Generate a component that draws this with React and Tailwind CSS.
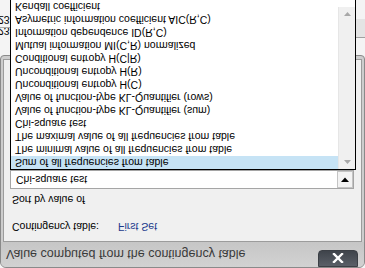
import React from "react";

const items = [
  "Sum of all frequencies from table",
  "The minimal value of all frequencies from table",
  "The maximal value of all frequencies from table",
  "Chi-square test",
  "Value of function-type KL-Quantifier (sum)",
  "Value of function-type KL-Quantifier (rows)",
  "Unconditional entropy H(C)",
  "Unconditional entropy H(R)",
  "Conditional entropy H(C|R)",
  "Mutual information MI(C,R) normalized",
  "Information dependence ID(R,C)",
  "Asymetric information coefficient AIC(R,C)",
  "Kendall coefficient",
];

export default function App() {
  return (
    <div
      className="relative w-[365px] h-[268px] overflow-hidden -scale-y-100 bg-[#f4f4f4] flex flex-col text-black"
      style={{ fontFamily: '"Liberation Sans", Arial, sans-serif' }}
    >
      {/* dialog window */}
      <div className="w-[365px] h-[213px] shrink-0 rounded-t-[6px] rounded-b-[4px] border border-[#8a8a8a] bg-[#cdcdcd] flex flex-col">
        {/* title bar */}
        <div className="h-[25px] shrink-0 flex items-start justify-between pl-[5px] pr-[6px] bg-gradient-to-b from-[#d2d2d2] to-[#c6c6c6] rounded-t-[5px]">
          <div className="text-[12.5px] leading-[15px] mt-[6px] text-[#3a3a3a]">
            Value computed from the contingency table
          </div>
          <div className="w-[40px] h-[17px] rounded-b-[4px] border border-[#3b3f45] bg-gradient-to-b from-[#5a5f67] to-[#3f444b] flex items-center justify-center">
            <svg width="12" height="10" viewBox="0 0 12 10">
              <path d="M2 1 L10 9 M10 1 L2 9" stroke="white" strokeWidth="2.4" strokeLinecap="square" />
            </svg>
          </div>
        </div>
        {/* client */}
        <div className="flex-1 mx-[2px] mb-[3px] bg-[#f0f0f0] border border-[#9c9c9c] flex flex-col text-[10.5px] leading-[13px]">
          <div className="pl-[8px] pt-[8px] flex">
            <span>Contingency table:</span>
            <span className="ml-[19px] text-[#1c3a8c]">First Set</span>
          </div>
          <div className="pl-[8px] mt-[14px]">Sort by value of</div>
          <div className="ml-[6px] mt-[4px] w-[344px] h-[19px] bg-white border border-[#a5a5a5] flex items-center justify-between">
            <span className="pl-[5px]">Chi-square test</span>
            <div className="w-[16px] h-[17px] border border-[#c4c4c4] bg-[#f3f3f3] flex items-center justify-center">
              <svg width="8" height="5" viewBox="0 0 8 5">
                <path d="M0 0 L8 0 L4 4.5 Z" fill="black" />
              </svg>
            </div>
          </div>
        </div>
      </div>

      {/* parent application behind */}
      <div className="flex-1 flex justify-between text-[10.5px] leading-[12px]">
        <div className="w-[11px] flex flex-col pt-[18px]">
          <div className="h-[9px] overflow-hidden -ml-[2px]">23</div>
          <div className="border-t border-[#a8a8a8] -ml-[2px] pt-[1px]">23</div>
        </div>
        <div className="w-[10px] flex flex-col pt-[17px]">
          <div className="border-t border-[#a0a0a0] h-[19px] bg-[#e4e4e4]"></div>
        </div>
      </div>

      {/* dropdown list overlay */}
      <div className="absolute left-[10px] top-[98px] w-[346px] h-[180px] bg-white border border-black flex text-[10.5px]">
        <div className="flex-1 flex flex-col">
          {items.map((t, i) => (
            <div
              key={i}
              className={
                "h-[13px] leading-[13px] pl-[4px] whitespace-nowrap overflow-hidden " +
                (i === 0 ? "bg-[#c6e3f5]" : "")
              }
            >
              {t}
            </div>
          ))}
        </div>
        <div className="w-[17px] h-[162px] bg-[#f0f0f0] border-l border-[#e6e6e6] flex flex-col justify-between items-center py-[5px]">
          <svg width="7" height="4" viewBox="0 0 7 4">
            <path d="M0 4 L7 4 L3.5 0 Z" fill="#a8a8a8" />
          </svg>
          <svg width="7" height="4" viewBox="0 0 7 4">
            <path d="M0 0 L7 0 L3.5 4 Z" fill="#a8a8a8" />
          </svg>
        </div>
      </div>
    </div>
  );
}
